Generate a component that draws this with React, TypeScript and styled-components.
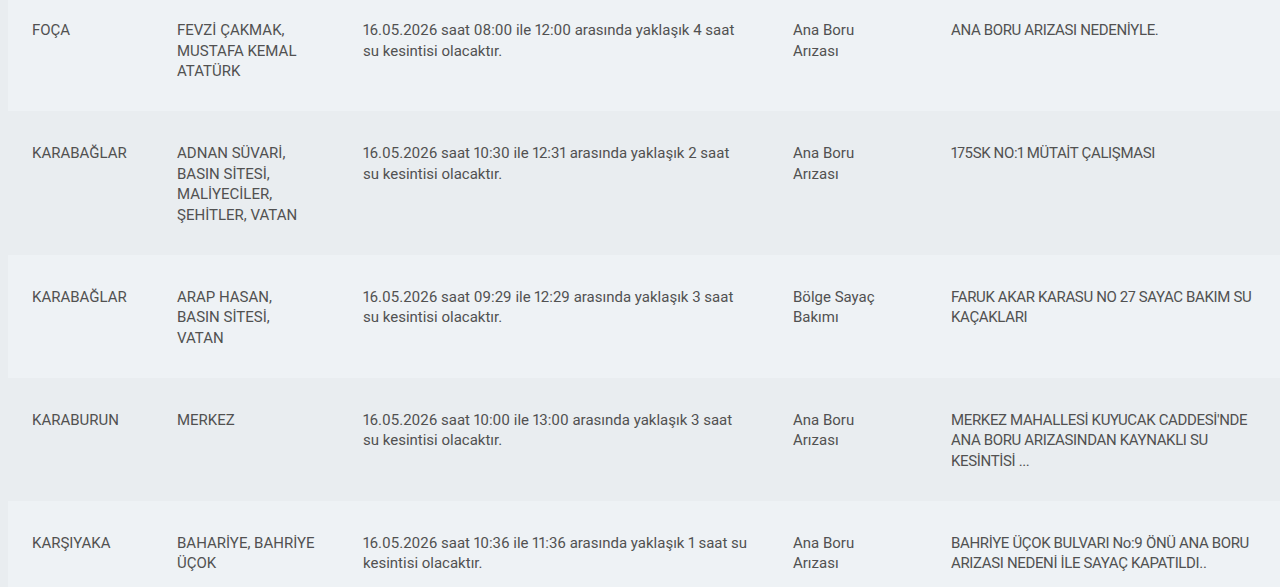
import React from "react";
import styled, { createGlobalStyle } from "styled-components";

const GlobalStyle = createGlobalStyle`
  html, body {
    margin: 0;
    padding: 0;
    background: #e9edf0;
    overflow: hidden;
  }
  body {
    font-family: Roboto, "Noto Sans", sans-serif;
  }
`;

const Viewport = styled.div`
  height: 587px;
  overflow: hidden;
  padding-left: 8px;
`;

const Table = styled.table`
  width: 1272px;
  margin-top: -12px;
  border-collapse: collapse;
  table-layout: fixed;
  color: #515151;
  font-size: 15px;
  line-height: 20.5px;
  font-variant-numeric: proportional-nums;
`;

const Row = styled.tr<{ $shade: boolean }>`
  background: ${(p) => (p.$shade ? "#e9edf0" : "#eef2f5")};
`;

const Cell = styled.td<{ $pr?: number; $tight?: boolean }>`
  vertical-align: top;
  padding: 32px ${(p) => p.$pr ?? 24}px 29.5px 24px;
  letter-spacing: ${(p) => (p.$tight ? "-0.35px" : "normal")};
`;

type Item = {
  district: string;
  areas: string;
  desc: string;
  type: string;
  reason: string;
};

const items: Item[] = [
  {
    district: "FOÇA",
    areas: "FEVZİ ÇAKMAK, MUSTAFA KEMAL ATATÜRK",
    desc: "16.05.2026 saat 08:00 ile 12:00 arasında yaklaşık 4 saat su kesintisi olacaktır.",
    type: "Ana Boru Arızası",
    reason: "ANA BORU ARIZASI NEDENİYLE.",
  },
  {
    district: "KARABAĞLAR",
    areas: "ADNAN SÜVARİ, BASIN SİTESİ, MALİYECİLER, ŞEHİTLER, VATAN",
    desc: "16.05.2026 saat 10:30 ile 12:31 arasında yaklaşık 2 saat su kesintisi olacaktır.",
    type: "Ana Boru Arızası",
    reason: "175SK NO:1 MÜTAİT ÇALIŞMASI",
  },
  {
    district: "KARABAĞLAR",
    areas: "ARAP HASAN, BASIN SİTESİ, VATAN",
    desc: "16.05.2026 saat 09:29 ile 12:29 arasında yaklaşık 3 saat su kesintisi olacaktır.",
    type: "Bölge Sayaç Bakımı",
    reason: "FARUK AKAR KARASU NO 27 SAYAC BAKIM SU KAÇAKLARI",
  },
  {
    district: "KARABURUN",
    areas: "MERKEZ",
    desc: "16.05.2026 saat 10:00 ile 13:00 arasında yaklaşık 3 saat su kesintisi olacaktır.",
    type: "Ana Boru Arızası",
    reason: "MERKEZ MAHALLESİ KUYUCAK CADDESİ'NDE ANA BORU ARIZASINDAN KAYNAKLI SU KESİNTİSİ ...",
  },
  {
    district: "KARŞIYAKA",
    areas: "BAHARİYE, BAHRİYE ÜÇOK",
    desc: "16.05.2026 saat 10:36 ile 11:36 arasında yaklaşık 1 saat su kesintisi olacaktır.",
    type: "Ana Boru Arızası",
    reason: "BAHRİYE ÜÇOK BULVARI No:9 ÖNÜ ANA BORU ARIZASI NEDENİ İLE SAYAÇ KAPATILDI..",
  },
];

export default function App() {
  return (
    <>
      <GlobalStyle />
      <Viewport>
        <Table>
          <colgroup>
            <col style={{ width: 145 }} />
            <col style={{ width: 186 }} />
            <col style={{ width: 430 }} />
            <col style={{ width: 158 }} />
            <col />
          </colgroup>
          <tbody>
            {items.map((it, i) => (
              <Row key={i} $shade={i % 2 === 1}>
                <Cell>{it.district}</Cell>
                <Cell $pr={23}>{it.areas}</Cell>
                <Cell $pr={21}>{it.desc}</Cell>
                <Cell $pr={34}>{it.type}</Cell>
                <Cell $tight>{it.reason}</Cell>
              </Row>
            ))}
          </tbody>
        </Table>
      </Viewport>
    </>
  );
}
